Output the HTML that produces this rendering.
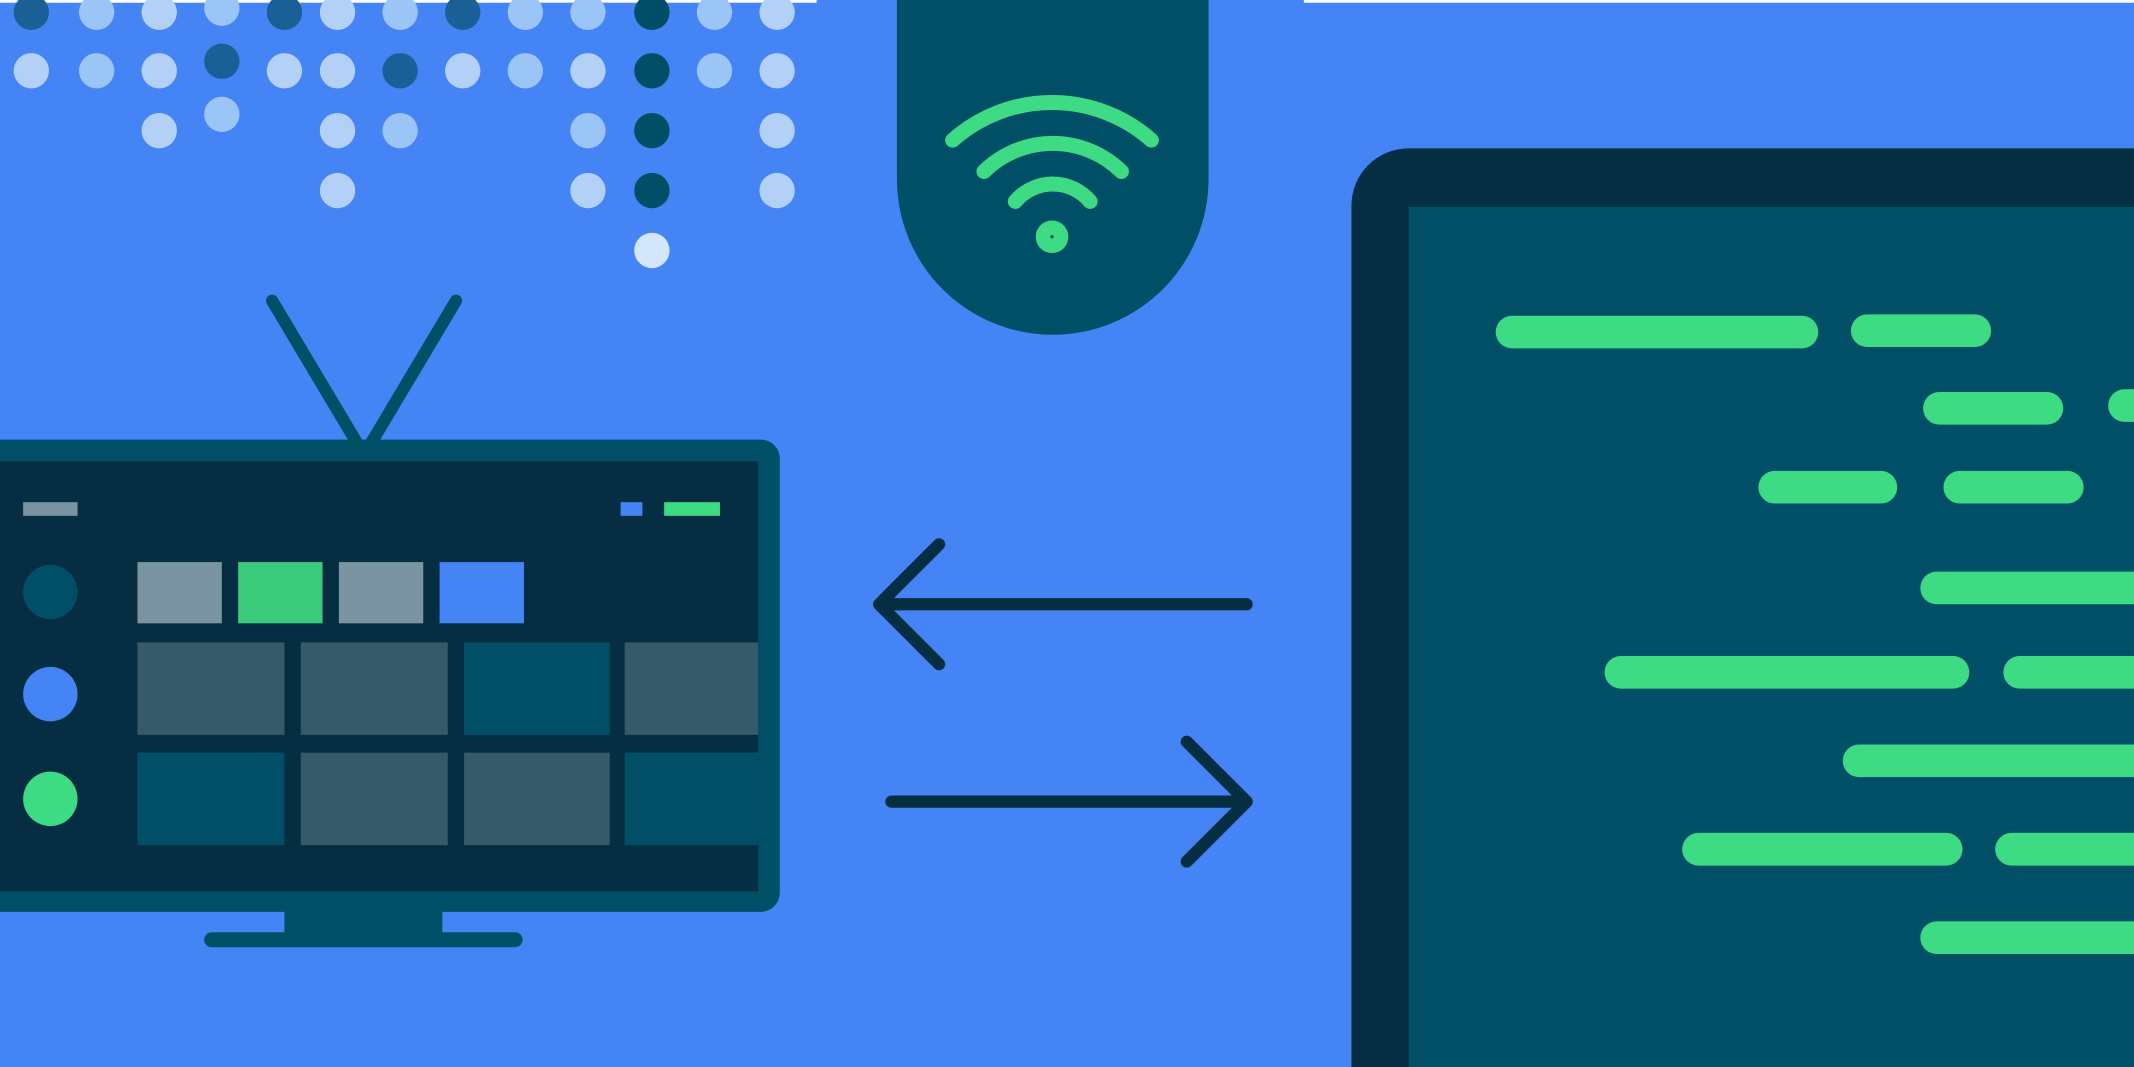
<!DOCTYPE html>
<html><head><meta charset="utf-8"><style>html,body{margin:0;padding:0;background:#4484f4;overflow:hidden;width:2134px;height:1067px}svg{display:block}</style></head>
<body>
<svg width="2134" height="1067" viewBox="0 0 1568 784" preserveAspectRatio="none" xmlns="http://www.w3.org/2000/svg">
<rect width="1568" height="784" fill="#4484f4"/>
<rect x="0" y="0" width="600" height="2" fill="#fff"/>
<rect x="958" y="0" width="610" height="2" fill="#fff"/>
<g>
<circle cx="23" cy="9" r="13" fill="#1a6096"/><circle cx="23" cy="52" r="13" fill="#b3d1f7"/>
<circle cx="71" cy="9" r="13" fill="#9cc5f7"/><circle cx="71" cy="52" r="13" fill="#9cc5f7"/>
<circle cx="117" cy="9" r="13" fill="#b3d1f7"/><circle cx="117" cy="52" r="13" fill="#b3d1f7"/><circle cx="117" cy="96" r="13" fill="#b3d1f7"/>
<circle cx="163" cy="6" r="13" fill="#9cc5f7"/><circle cx="163" cy="45" r="13" fill="#1a6096"/><circle cx="163" cy="84" r="13" fill="#9cc5f7"/>
<circle cx="209" cy="9" r="13" fill="#1a6096"/><circle cx="209" cy="52" r="13" fill="#b3d1f7"/>
<circle cx="248" cy="9" r="13" fill="#b3d1f7"/><circle cx="248" cy="52" r="13" fill="#b3d1f7"/><circle cx="248" cy="96" r="13" fill="#b3d1f7"/><circle cx="248" cy="140" r="13" fill="#b3d1f7"/>
<circle cx="294" cy="9" r="13" fill="#9cc5f7"/><circle cx="294" cy="52" r="13" fill="#1a6096"/><circle cx="294" cy="96" r="13" fill="#9cc5f7"/>
<circle cx="340" cy="9" r="13" fill="#1a6096"/><circle cx="340" cy="52" r="13" fill="#b3d1f7"/>
<circle cx="386" cy="9" r="13" fill="#9cc5f7"/><circle cx="386" cy="52" r="13" fill="#9cc5f7"/>
<circle cx="432" cy="9" r="13" fill="#9cc5f7"/><circle cx="432" cy="52" r="13" fill="#b3d1f7"/><circle cx="432" cy="96" r="13" fill="#9cc5f7"/><circle cx="432" cy="140" r="13" fill="#b3d1f7"/>
<circle cx="479" cy="9" r="13" fill="#004d66"/><circle cx="479" cy="52" r="13" fill="#004d66"/><circle cx="479" cy="96" r="13" fill="#004d66"/><circle cx="479" cy="140" r="13" fill="#004d66"/><circle cx="479" cy="184" r="13" fill="#d4e6fb"/>
<circle cx="525" cy="9" r="13" fill="#9cc5f7"/><circle cx="525" cy="52" r="13" fill="#9cc5f7"/>
<circle cx="571" cy="9" r="13" fill="#b3d1f7"/><circle cx="571" cy="52" r="13" fill="#b3d1f7"/><circle cx="571" cy="96" r="13" fill="#b3d1f7"/><circle cx="571" cy="140" r="13" fill="#b3d1f7"/>
</g>
<path d="M659 0 H888 V131.5 A114.5 114.5 0 0 1 659 131.5 Z" fill="#004f66"/>
<g fill="none" stroke="#3ddc84" stroke-width="11" stroke-linecap="round">
<path d="M700 103 A110 110 0 0 1 846 103"/>
<path d="M723 126 A72 72 0 0 1 824 126"/>
<path d="M746 148 A36 36 0 0 1 801 148"/>
</g>
<circle cx="773" cy="174" r="12" fill="#3ddc84"/><circle cx="773" cy="174" r="1.2" fill="#004f66"/>
<g stroke="#004f66" stroke-width="9" stroke-linecap="round"><line x1="200" y1="221" x2="262" y2="325"/><line x1="335" y1="221" x2="273" y2="325"/></g>
<path d="M0 323 H559 A14 14 0 0 1 573 337 V656 A14 14 0 0 1 559 670 H0 Z" fill="#004f66"/>
<rect x="0" y="339" width="557" height="316" fill="#062e42"/>
<rect x="209" y="668" width="116" height="19" fill="#004f66"/>
<rect x="150" y="685" width="234" height="11" rx="5.5" fill="#004f66"/>
<rect x="17" y="369" width="40" height="10" fill="#7a95a1"/>
<rect x="456" y="369" width="16" height="10" fill="#4484f4"/>
<rect x="488" y="369" width="41" height="10" fill="#3ddc84"/>
<circle cx="37" cy="435" r="20" fill="#004f66"/>
<circle cx="37" cy="510" r="20" fill="#4484f4"/>
<circle cx="37" cy="587" r="20" fill="#3ddc84"/>
<rect x="101" y="413" width="62" height="45" fill="#7a95a1"/>
<rect x="175" y="413" width="62" height="45" fill="#3ccb7d"/>
<rect x="249" y="413" width="62" height="45" fill="#7a95a1"/>
<rect x="323" y="413" width="62" height="45" fill="#4484f4"/>
<rect x="101" y="472" width="108" height="68" fill="#365a6a"/>
<rect x="221" y="472" width="108" height="68" fill="#365a6a"/>
<rect x="341" y="472" width="107" height="68" fill="#004f66"/>
<rect x="459" y="472" width="98" height="68" fill="#365a6a"/>
<rect x="101" y="553" width="108" height="68" fill="#004f66"/>
<rect x="221" y="553" width="108" height="68" fill="#365a6a"/>
<rect x="341" y="553" width="107" height="68" fill="#365a6a"/>
<rect x="459" y="553" width="98" height="68" fill="#004f66"/>
<g fill="none" stroke="#062e42" stroke-width="9" stroke-linecap="round" stroke-linejoin="round">
<path d="M646 444 H916 M690 400 L646 444 L690 488"/>
<path d="M655 589 H916 M872 545 L916 589 L872 633"/>
</g>
<path d="M993 784 V151 A42 42 0 0 1 1035 109 H1568 V784 Z" fill="#072f44"/>
<path d="M1035 152 H1568 V784 H1035 Z" fill="#004f66"/>
<g fill="#3ddc84">
<rect x="1099" y="232" width="237" height="24" rx="12"/><rect x="1360" y="231" width="103" height="24" rx="12"/>
<rect x="1413" y="288" width="103" height="24" rx="12"/><path d="M1561 286 H1568 V310 H1561 A12 12 0 0 1 1561 286 Z"/>
<rect x="1292" y="346" width="102" height="24" rx="12"/><rect x="1428" y="346" width="103" height="24" rx="12"/>
<path d="M1423 420 H1568 V444 H1423 A12 12 0 0 1 1423 420 Z"/>
<rect x="1179" y="482" width="268" height="24" rx="12"/><path d="M1484 482 H1568 V506 H1484 A12 12 0 0 1 1484 482 Z"/>
<path d="M1366 547 H1568 V571 H1366 A12 12 0 0 1 1366 547 Z"/>
<rect x="1236" y="612" width="206" height="24" rx="12"/><path d="M1478 612 H1568 V636 H1478 A12 12 0 0 1 1478 612 Z"/>
<path d="M1423 677 H1568 V701 H1423 A12 12 0 0 1 1423 677 Z"/>
</g>
</svg>
</body></html>
